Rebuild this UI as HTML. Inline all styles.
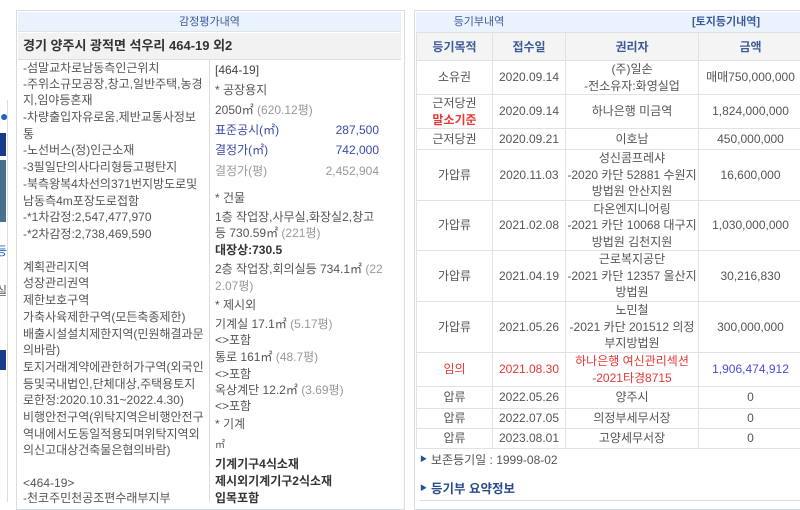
<!DOCTYPE html>
<html><head><meta charset="utf-8"><style>
*{margin:0;padding:0;box-sizing:border-box}
body{width:800px;height:502px;overflow:hidden;background:#fff;font-family:"Liberation Sans","Noto Sans CJK KR",sans-serif;font-size:12px;color:#555;position:relative}
.a{position:absolute;white-space:nowrap;line-height:16px;height:16px}
.b{color:#3a4aa8}.g{color:#999}.k{color:#333;font-weight:bold}
.box{position:absolute;border:1px solid #d6dde6}
table{border-collapse:collapse;position:absolute;left:416px;top:32px;width:386px;table-layout:fixed}
td{border:1px solid #e2e2e2;text-align:center;line-height:16.5px;color:#555;padding:0}
th{border:1px solid #e2e2e2;height:28px;color:#3c5a9a;font-weight:bold;background:#f4f4f4}
.r{color:#e53935}
</style></head><body>
<div style="position:absolute;left:0;top:100px;width:8px;height:12px;border-right:1px solid #ddd"></div>
<div class="a" style="left:0;top:108px;color:#1f63c6;font-weight:bold;font-size:14px">&#9679;</div>
<div style="position:absolute;left:0;top:133px;width:6px;height:23px;background:#173c8c"></div>
<div style="position:absolute;left:0;top:160px;width:6px;height:62px;background:#4a7090"></div>
<div class="a" style="left:-4px;top:243px;color:#1f63c6">등</div>
<div class="a" style="left:-4px;top:283px;color:#555">실</div>
<div style="position:absolute;left:0;top:350px;width:6px;height:20px;background:#173c8c"></div>
<div style="position:absolute;left:7px;top:100px;width:1px;height:402px;background:#ddd"></div>

<div class="box" style="left:16px;top:10px;width:389px;height:500px"></div>
<div style="position:absolute;left:18px;top:12px;width:383px;height:20px;background:#eaf3fd;border-bottom:1px solid #dde4ec"></div>
<div class="a" style="left:18px;width:383px;top:14px;text-align:center;color:#3c5a9a;font-size:11px">감정평가내역</div>
<div style="position:absolute;left:18px;top:33px;width:383px;height:27px;background:#f2f2f2;border-bottom:1px solid #ddd"></div>
<div class="a k" style="left:23px;top:38px;font-size:13px">경기 양주시 광적면 석우리 464-19 외2</div>
<div style="position:absolute;left:209px;top:60px;width:1px;height:442px;background:#ddd"></div>

<div class="a" style="left:23px;top:60px">-섬말교차로남동측인근위치</div>
<div class="a" style="left:23px;top:76px">-주위소규모공장,창고,일반주택,농경</div>
<div class="a" style="left:23px;top:92px">지,임야등혼재</div>
<div class="a" style="left:23px;top:109px">-차량출입자유로움,제반교통사정보</div>
<div class="a" style="left:23px;top:126px">통</div>
<div class="a" style="left:23px;top:142px">-노선버스(정)인근소재</div>
<div class="a" style="left:23px;top:159px">-3필일단의사다리형등고평탄지</div>
<div class="a" style="left:23px;top:176px">-북측왕복4차선의371번지방도로및</div>
<div class="a" style="left:23px;top:193px">남동측4m포장도로접함</div>
<div class="a" style="left:23px;top:209px">-*1차감정:2,547,477,970</div>
<div class="a" style="left:23px;top:226px">-*2차감정:2,738,469,590</div>
<div class="a" style="left:23px;top:259px">계획관리지역</div>
<div class="a" style="left:23px;top:275px">성장관리권역</div>
<div class="a" style="left:23px;top:292px">제한보호구역</div>
<div class="a" style="left:23px;top:309px">가축사육제한구역(모든축종제한)</div>
<div class="a" style="left:23px;top:326px">배출시설설치제한지역(민원해결과문</div>
<div class="a" style="left:23px;top:342px">의바람)</div>
<div class="a" style="left:23px;top:359px">토지거래계약에관한허가구역(외국인</div>
<div class="a" style="left:23px;top:376px">등및국내법인,단체대상,주택용토지</div>
<div class="a" style="left:23px;top:392px">로한정:2020.10.31~2022.4.30)</div>
<div class="a" style="left:23px;top:409px">비행안전구역(위탁지역은비행안전구</div>
<div class="a" style="left:23px;top:426px">역내에서도동일적용되며위탁지역외</div>
<div class="a" style="left:23px;top:442px">의신고대상건축물은협의바람)</div>
<div class="a" style="left:23px;top:475px">&lt;464-19&gt;</div>
<div class="a" style="left:23px;top:490px">-천코주민천공조편수래부지부</div>

<div class="a k" style="left:215px;top:62px;font-weight:normal;color:#444">[464-19]</div>
<div class="a" style="left:215px;top:82px">* 공장용지</div>
<div class="a" style="left:215px;top:102px">2050㎡ <span class="g">(620.12평)</span></div>
<div class="a b" style="left:215px;top:122px">표준공시(㎡)</div><div class="a b" style="left:300px;width:79px;text-align:right;top:122px">287,500</div>
<div class="a b" style="left:215px;top:142px">결정가(㎡)</div><div class="a b" style="left:300px;width:79px;text-align:right;top:142px">742,000</div>
<div class="a g" style="left:215px;top:163px">결정가(평)</div><div class="a g" style="left:300px;width:79px;text-align:right;top:163px">2,452,904</div>
<div class="a" style="left:215px;top:190px">* 건물</div>
<div class="a" style="left:215px;top:209px">1층 작업장,사무실,화장실2,창고</div>
<div class="a" style="left:215px;top:225px">등 730.59㎡ <span class="g">(221평)</span></div>
<div class="a k" style="left:215px;top:242px">대장상:730.5</div>
<div class="a" style="left:215px;top:261px">2층 작업장,회의실등 734.1㎡ <span class="g">(22</span></div>
<div class="a g" style="left:215px;top:278px">2.07평)</div>
<div class="a" style="left:215px;top:297px">* 제시외</div>
<div class="a" style="left:215px;top:316px">기계실 17.1㎡ <span class="g">(5.17평)</span></div>
<div class="a" style="left:215px;top:332px">&lt;&gt;포함</div>
<div class="a" style="left:215px;top:349px">통로 161㎡ <span class="g">(48.7평)</span></div>
<div class="a" style="left:215px;top:366px">&lt;&gt;포함</div>
<div class="a" style="left:215px;top:382px">옥상계단 12.2㎡ <span class="g">(3.69평)</span></div>
<div class="a" style="left:215px;top:398px">&lt;&gt;포함</div>
<div class="a" style="left:215px;top:416px">* 기계</div>
<div class="a" style="left:215px;top:438px;font-size:10px">㎡</div>
<div class="a k" style="left:215px;top:456px">기계기구4식소재</div>
<div class="a k" style="left:215px;top:473px">제시외기계기구2식소재</div>
<div class="a k" style="left:215px;top:490px">입목포함</div>

<div class="box" style="left:414px;top:10px;width:400px;height:500px"></div>
<div style="position:absolute;left:416px;top:12px;width:386px;height:20px;background:#eaf3fd"></div>
<div class="a" style="left:412px;width:134px;top:14px;text-align:center;color:#3c5a9a;font-size:11px">등기부내역</div>
<div class="a" style="left:692px;top:14px;color:#3c5a9a;font-weight:bold;font-size:11px">[토지등기내역]</div>
<table>
<colgroup><col style="width:76px"><col style="width:73px"><col style="width:133px"><col style="width:104px"></colgroup>
<tr><th>등기목적</th><th>접수일</th><th>권리자</th><th>금액</th></tr>
<tr style="height:33px"><td>소유권</td><td>2020.09.14</td><td>(주)일손<br>-전소유자:화영실업</td><td>매매750,000,000</td></tr>
<tr style="height:34px"><td>근저당권<br><b class="r">말소기준</b></td><td>2020.09.14</td><td>하나은행 미금역</td><td>1,824,000,000</td></tr>
<tr style="height:21px"><td>근저당권</td><td>2020.09.21</td><td>이호남</td><td>450,000,000</td></tr>
<tr style="height:50px"><td>가압류</td><td>2020.11.03</td><td>성신콤프레샤<br>-2020 카단 52881 수원지<br>방법원 안산지원</td><td>16,600,000</td></tr>
<tr style="height:50px"><td>가압류</td><td>2021.02.08</td><td>다온엔지니어링<br>-2021 카단 10068 대구지<br>방법원 김천지원</td><td>1,030,000,000</td></tr>
<tr style="height:51px"><td>가압류</td><td>2021.04.19</td><td>근로복지공단<br>-2021 카단 12357 울산지<br>방법원</td><td>30,216,830</td></tr>
<tr style="height:51px"><td>가압류</td><td>2021.05.26</td><td>노민철<br>-2021 카단 201512 의정<br>부지방법원</td><td>300,000,000</td></tr>
<tr style="height:34px"><td class="r">임의</td><td class="r">2021.08.30</td><td class="r">하나은행 여신관리섹션<br>-2021타경8715</td><td style="color:#4a4ae0">1,906,474,912</td></tr>
<tr style="height:22px"><td>압류</td><td>2022.05.26</td><td>양주시</td><td>0</td></tr>
<tr style="height:20px"><td>압류</td><td>2022.07.05</td><td>의정부세무서장</td><td>0</td></tr>
<tr style="height:20px"><td>압류</td><td>2023.08.01</td><td>고양세무서장</td><td>0</td></tr>
</table>
<div class="a" style="left:420px;top:452px;font-size:7px;color:#1f4e9c">&#9654;</div>
<div class="a" style="left:431px;top:452px">보존등기일 : 1999-08-02</div>
<div class="a" style="left:420px;top:481px;font-size:7px;color:#1f4e9c">&#9654;</div>
<div class="a" style="left:431px;top:481px;color:#2a4c8c;font-weight:bold;font-size:12.5px">등기부 요약정보</div>
<div style="position:absolute;left:420px;top:500px;width:382px;height:2px;border-top:1px solid #ddd"></div>
</body></html>
